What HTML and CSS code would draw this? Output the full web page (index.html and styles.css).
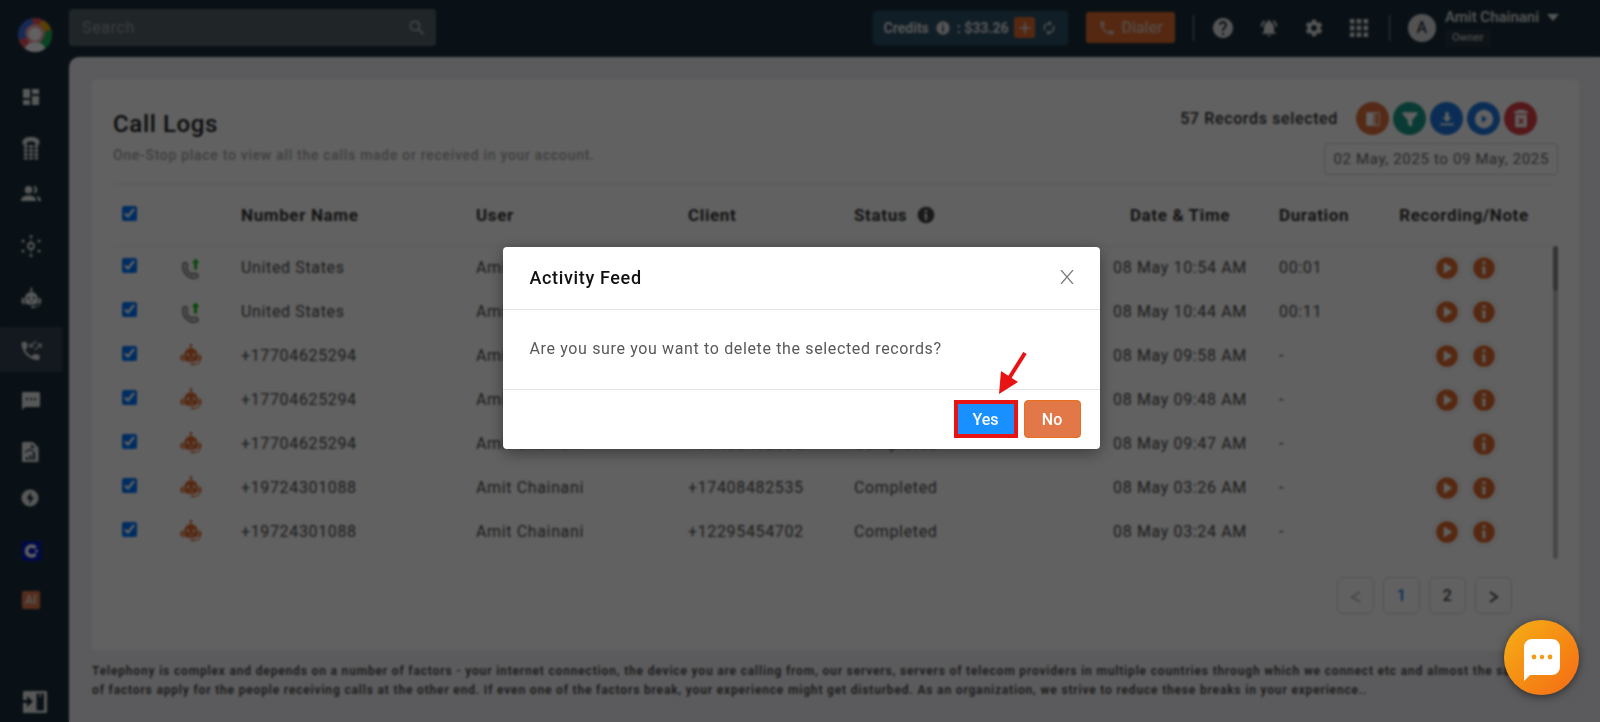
FILE: index.html
```html
<!DOCTYPE html>
<html lang="en">
<head>
  <meta charset="UTF-8" />
  <meta name="viewport" content="width=device-width, initial-scale=1" />
  <title>Call Logs</title>
  <link rel="stylesheet" href="styles.css">
</head>
<body>

<svg class="sprite" aria-hidden="true">
  <symbol id="i-bot" viewBox="0 0 24 24">
    <circle cx="12" cy="0" r="1.500"/>
    <path d="M11.200 0h1.600v5h-1.600z"/>
    <path fill-rule="evenodd" d="M12 3.500c-4.500 0-7.500 3.500-7.500 8.500v4.500c4.500 2.500 10.500 2.500 15 0V12c0-5-3-8.500-7.500-8.500zM8.800 9.300a1.300 1.300 0 1 1 0 2.600 1.300 1.300 0 0 1 0-2.600zm6.400 0a1.300 1.300 0 1 1 0 2.600 1.300 1.300 0 0 1 0-2.600zM9.500 13.500c1.500 1 3.500 1 5 0-.5 2-4.500 2-5 0z"/>
    <path d="M3.500 10v8C1.800 17.800.5 16.500.5 14s1.300-3.800 3-4zM20.500 10v8c1.700-.2 3-1.500 3-4s-1.300-3.800-3-4z"/>
    <path fill="none" stroke="currentColor" stroke-width="1.100" d="M21.500 18c-.8 2-3 2.800-6 3"/>
    <rect x="11.500" y="19.800" width="4.500" height="2.200" rx="1.100"/>
  </symbol>
  <symbol id="i-outgoing" viewBox="0 0 24 24">
    <path fill="none" stroke="#8c8c8c" stroke-width="2.400" stroke-linejoin="round" d="M3.500 7.500c1.500-1.500 3.500-1.500 4.300.3.600 1.500.2 2.600-1 3.700.8 3.500 3.200 6.400 6.600 7.900 1.300-1.600 2.700-2 4.300-1.200 2 1 2.300 2.800.8 4-6.500 3.300-17-4-15-14.700z"/>
    <path fill="#0db50d" d="M17 1.500l4 5h-2.500v7h-3v-7H13z"/>
  </symbol>
  <symbol id="i-play" viewBox="0 0 24 24">
    <path fill-rule="evenodd" d="M12 2a10 10 0 1 0 0 20 10 10 0 0 0 0-20zM9 7v10l8-5z"/>
  </symbol>
  <symbol id="i-info" viewBox="0 0 24 24">
    <path fill-rule="evenodd" d="M12 2a10 10 0 1 0 0 20 10 10 0 0 0 0-20zm-1.300 4h2.600v2.600h-2.600zM10 10.500h3.300V18h-2.600v-5.500H10z"/>
  </symbol>
  <symbol id="i-phone" viewBox="0 0 24 24">
    <path d="M6.620 10.790c1.440 2.830 3.760 5.140 6.590 6.590l2.200-2.200c.27-.27.67-.36 1.020-.24 1.120.37 2.330.57 3.570.57.55 0 1 .45 1 1V20c0 .55-.45 1-1 1-9.390 0-17-7.610-17-17 0-.55.45-1 1-1h3.500c.55 0 1 .45 1 1 0 1.250.2 2.450.57 3.570.11.35.03.74-.25 1.020z"/>
  </symbol>
</svg>

<div class="app">
  <aside class="sidebar">
    <a class="logo" href="#" aria-label="Home">
      <svg viewBox="0 0 34 34">
        <clipPath id="disc"><circle cx="17" cy="17" r="17"/></clipPath>
        <g clip-path="url(#disc)">
          <rect width="34" height="34" fill="#3d6fe0"/>
          <path fill="#e8505b" d="M17 17L14 0h11v8z"/>
          <path fill="#f0a800" d="M17 17l6-14 11 0v12z"/>
          <path fill="#1fae5a" d="M17 17l17-6v18l-8 5z"/>
          <path fill="#e8505b" d="M17 17L0 22l6 10 8-4z"/>
          <path fill="#f3a5aa" d="M7 16a10 10 0 0 1 20 0l-4 8H11z"/>
          <circle cx="17" cy="16" r="6.500" fill="#fff"/>
          <path fill="#fff" d="M6 34c1-7 5-10 11-10s10 3 11 10z"/>
        </g>
      </svg>
    </a>
    <nav class="nav">
      <a href="#" aria-label="Dashboard"><svg viewBox="0 0 24 24"><path d="M4 1h7v9H4zM4 12h7v5H4zM13 1h7v5h-7zM13 8h7v9h-7z"/></svg></a>
      <a href="#" aria-label="Dialpad"><svg viewBox="0 0 24 24">
        <path d="M12-1c5 0 8.500 2 8.500 5v2.500h-4.500V4.500c-1-1.200-7-1.200-8 0v2H3.500V4c0-3 3.500-5 8.500-5z"/>
        <path d="M5 7h3.500v3H5zM10.300 7h3.500v3h-3.500zM15.500 7H19v3h-3.500zM5 11h3.500v3H5zM10.300 11h3.500v3h-3.500zM15.500 11H19v3h-3.500zM5 15h3.500v3H5zM10.300 15h3.500v3h-3.500zM15.500 15H19v3h-3.500zM5 19h3.500v2.500H5zM10.300 19h3.500v2.500h-3.500zM15.500 19H19v2.500h-3.500z"/></svg></a>
      <a href="#" aria-label="Contacts"><svg viewBox="0 0 24 24"><circle cx="9.500" cy="1.800" r="3.800"/><path d="M2 13c0-4 3.500-5.500 7.500-5.500S17 9 17 13zM14.500-2c5-.5 5 7.800 0 7.600 1.600-2 1.600-5.500 0-7.600zM17.500 8c3 .5 4.500 2.200 4.500 5h-3c0-2.200-.4-3.700-1.500-5z"/></svg></a>
      <a href="#" aria-label="Integrations"><svg viewBox="0 0 24 24"><circle cx="12" cy="8" r="3" fill="none" stroke="currentColor" stroke-width="1.800"/>
        <circle cx="12" cy="-1.500" r="1.500"/><circle cx="12" cy="17.500" r="1.500"/><circle cx="4" cy="3" r="1.500"/><circle cx="20" cy="3" r="1.500"/><circle cx="4" cy="13" r="1.500"/><circle cx="20" cy="13" r="1.500"/><path d="M11.600 1h.8v3h-.8zM11.600 12h.8v3h-.8z"/></svg></a>
      <a href="#" aria-label="Voice bots"><svg viewBox="0 0 24 24"><g transform="translate(2 1) scale(.86)"><use href="#i-bot" width="24" height="24"/></g></svg></a>
      <a href="#" class="active" aria-label="Call logs"><svg viewBox="0 0 24 24">
        <path d="M6.120 11.790c1.440 2.830 3.760 5.140 6.590 6.590l2.200-2.200c.27-.27.67-.36 1.020-.24 1.120.37 2.330.57 3.570.57.55 0 1 .45 1 1V21c0 .55-.45 1-1 1-9.390 0-17-7.610-17-17 0-.55.45-1 1-1h3.500c.55 0 1 .45 1 1 0 1.250.2 2.450.57 3.570.11.35.03.74-.25 1.020z"/>
        <path fill="none" stroke="currentColor" stroke-width="1.200" d="M17 3l-6 6M11 5v4h4M16 12l6-6M18 6h4v4"/></svg></a>
      <a href="#" aria-label="Messages"><svg viewBox="0 0 24 24"><path fill-rule="evenodd" d="M4.500 4h15c1 0 1.500.5 1.500 1.500v12c0 1-.5 1.500-1.500 1.500H6l-3 3V5.500C3 4.500 3.500 4 4.500 4zM7 10v2h2v-2zm4 0v2h2v-2zm4 0v2h2v-2z"/></svg></a>
      <a href="#" aria-label="Reports"><svg viewBox="0 0 24 24"><path fill-rule="evenodd" d="M4.500 4H14l5.500 5.500v13c0 1-.5 1.500-1.500 1.500H4.500C3.500 24 3 23.500 3 22.500v-17C3 4.500 3.500 4 4.500 4zM12 6v4h4zM7 19v3h2v-3zm3.500-2v5h2v-5zm3.500-3v8h2v-8zM6 15l5-3 2 2 3-3-3 1.500-2-2-5 3z"/></svg></a>
      <a href="#" aria-label="Automation"><svg viewBox="0 0 24 24"><path fill-rule="evenodd" d="M11 1.500a8.500 8.500 0 1 0 0 17 8.500 8.500 0 0 0 0-17zM12 4v5h3l-4.500 7v-5H7.500z"/></svg></a>
      <a href="#" aria-label="Connect"><svg viewBox="0 0 24 24"><rect x="2.500" y="3" width="20" height="20" rx="2" fill="#0018b8"/><path fill="none" stroke="#fff" stroke-width="3.600" d="M16.500 10a5 5 0 1 0 0 6"/><circle cx="17.500" cy="13" r="1.500" fill="#fff"/></svg></a>
      <a href="#" aria-label="AI"><span class="ai">AI</span></a>
    </nav>
    <button class="collapse" aria-label="Expand menu">
      <svg viewBox="0 0 24 22"><path fill-rule="evenodd" d="M1.500 0h21c1 0 1.500.5 1.500 1.500v19c0 1-.5 1.500-1.500 1.500h-21C.5 22 0 21.500 0 20.500V12h4v4l6-5.500L4 5v4H0V1.500C0 .5.500 0 1.500 0zM13.500 2.500v17H21v-17zm3 .5h1.500v3h-1.500z"/></svg>
    </button>
  </aside>

  <div class="main">
    <header class="topbar">
      <form class="search">
        <input type="text" placeholder="Search" aria-label="Search">
        <svg viewBox="0 0 24 24"><path d="M15.500 14h-.79l-.28-.27A6.470 6.470 0 0 0 16 9.500 6.500 6.500 0 1 0 9.500 16c1.610 0 3.090-.59 4.230-1.570l.27.28v.79l5 4.990L20.490 19l-4.990-5zm-6 0C7.010 14 5 11.990 5 9.500S7.010 5 9.500 5 14 7.010 14 9.500 11.990 14 9.500 14z"/></svg>
      </form>
      <div class="tools">
        <div class="credits">
          <span>Credits</span>
          <svg class="credit-info" viewBox="0 0 24 24"><use href="#i-info"/></svg>
          <span>: $33.26</span>
          <button class="plus" aria-label="Add credits"><svg viewBox="0 0 24 24"><path d="M10.800 4h2.400v6.800H20v2.400h-6.800V20h-2.400v-6.800H4v-2.400h6.800z"/></svg></button>
          <button class="refresh" aria-label="Refresh"><svg viewBox="0 0 24 24"><path d="M12 6v3l4-4-4-4v3c-4.420 0-8 3.580-8 8 0 1.570.46 3.030 1.240 4.260L6.700 14.800A5.870 5.870 0 0 1 6 12c0-3.310 2.690-6 6-6zm6.760 1.740L17.300 9.200c.44.84.7 1.790.7 2.800 0 3.310-2.690 6-6 6v-3l-4 4 4 4v-3c4.420 0 8-3.580 8-8 0-1.570-.46-3.030-1.240-4.260z"/></svg></button>
        </div>
        <button class="dialer"><svg viewBox="0 0 24 24"><use href="#i-phone"/></svg>Dialer</button>
        <div class="shortcuts">
          <button aria-label="Help"><svg viewBox="1 1 22 22"><path d="M12 2C6.480 2 2 6.480 2 12s4.480 10 10 10 10-4.480 10-10S17.520 2 12 2zm1 17h-2v-2h2v2zm2.070-7.750l-.9.920C13.450 12.900 13 13.500 13 15h-2v-.5c0-1.100.45-2.100 1.170-2.830l1.240-1.260c.37-.36.59-.86.59-1.410 0-1.100-.9-2-2-2s-2 .9-2 2H8c0-2.210 1.790-4 4-4s4 1.790 4 4c0 .88-.36 1.680-.93 2.250z"/></svg></button>
          <button aria-label="Notifications"><svg viewBox="0 0 24 24"><path d="M7.580 4.080L6.150 2.650C3.750 4.480 2.170 7.300 2.030 10.500h2a8.450 8.450 0 0 1 3.550-6.420zm12.390 6.420h2c-.15-3.200-1.730-6.020-4.120-7.850l-1.420 1.430a8.500 8.500 0 0 1 3.540 6.420zM18 11c0-3.070-1.640-5.640-4.500-6.320V4c0-.83-.67-1.500-1.500-1.500s-1.500.67-1.500 1.500v.68C7.630 5.360 6 7.920 6 11v5l-2 2v1h16v-1l-2-2v-5zm-6 11c1.100 0 2-.9 2-2h-4c0 1.100.9 2 2 2z"/></svg></button>
          <button aria-label="Settings"><svg viewBox="0 0 24 24"><path d="M19.430 12.980c.04-.32.07-.64.07-.98s-.03-.66-.07-.98l2.110-1.650c.19-.15.24-.42.12-.64l-2-3.460c-.12-.22-.39-.3-.61-.22l-2.490 1c-.52-.4-1.080-.73-1.690-.98l-.38-2.650A.49.490 0 0 0 14 2h-4c-.25 0-.46.180-.49.420l-.38 2.650c-.61.25-1.170.59-1.690.98l-2.490-1c-.23-.09-.49 0-.61.22l-2 3.460c-.13.22-.07.49.12.64l2.110 1.650c-.04.32-.07.65-.07.98s.03.66.07.98l-2.110 1.650c-.19.15-.24.42-.12.64l2 3.460c.12.22.39.3.61.22l2.490-1c.52.4 1.080.73 1.690.98l.38 2.650c.03.24.24.42.49.42h4c.25 0 .46-.18.49-.42l.38-2.650c.61-.25 1.170-.59 1.690-.98l2.490 1c.23.090.49 0 .61-.22l2-3.460c.12-.22.07-.49-.12-.64l-2.110-1.650zM12 15.500c-1.930 0-3.500-1.570-3.500-3.500s1.570-3.500 3.500-3.500 3.500 1.570 3.500 3.500-1.570 3.500-3.500 3.500z"/></svg></button>
          <button aria-label="Apps"><svg viewBox="1 1 22 22"><path d="M2 2h5v5H2zM9.500 2h5v5h-5zM17 2h5v5h-5zM2 9.500h5v5H2zM9.500 9.500h5v5h-5zM17 9.500h5v5h-5zM2 17h5v5H2zM9.500 17h5v5h-5zM17 17h5v5h-5z"/></svg></button>
        </div>
        <div class="user">
          <span class="avatar">A</span>
          <div class="who">
            <button class="who-name">Amit Chainani <svg viewBox="0 0 12 7"><path d="M0 0h12L6 7z"/></svg></button>
            <span class="role">Owner</span>
          </div>
        </div>
      </div>
    </header>

    <main class="content">
      <section class="card">
        <div class="card-head">
          <div>
            <h1>Call Logs</h1>
            <p class="sub">One-Stop place to view all the calls made or received in your account.</p>
          </div>
          <div class="card-side">
            <div class="actions">
              <span class="selected">57 Records selected</span>
              <button class="act columns" aria-label="Columns"><svg viewBox="0 0 24 24"><path fill-rule="evenodd" d="M4 4h16v16H4zM12.500 5.200v13.600h1.200V5.200zM15 5.200v13.600h3.800V5.200z"/></svg></button>
              <button class="act filter" aria-label="Filter"><svg viewBox="0 0 24 24"><path d="M3 4h18v2l-6.500 7.500V21l-5-2v-5.500L3 6z"/></svg></button>
              <button class="act download" aria-label="Download"><svg viewBox="0 0 24 24"><path d="M10 4h4v6h3.500L12 15.500 6.500 10H10zM4 17.500h16v2H4z"/></svg></button>
              <button class="act playall" aria-label="Play all"><svg viewBox="0 0 24 24"><path fill-rule="evenodd" d="M12 1a11 11 0 1 0 0 22 11 11 0 0 0 0-22zM9.500 7.500v9l6-4.500z"/></svg></button>
              <button class="act delete" aria-label="Delete"><svg viewBox="0 0 24 24"><path fill-rule="evenodd" d="M8.500 1h7l1 1.500H20v3H4v-3h3.500zM5 7h14v13.500c0 1-.5 1.500-1.500 1.500h-11c-1 0-1.500-.5-1.500-1.500zM9.700 10.500l-1.200 1.200 2.300 2.800-2.300 2.800 1.200 1.200 2.300-2.500 2.300 2.500 1.200-1.200-2.300-2.800 2.300-2.800-1.200-1.200-2.300 2.500z"/></svg></button>
            </div>
            <button class="range">02 May, 2025 to 09 May, 2025</button>
          </div>
        </div>

        <div class="table-box">
          <table>
            <colgroup>
              <col class="c-check"><col class="c-type"><col class="c-name"><col class="c-user"><col class="c-client"><col class="c-status"><col class="c-date"><col class="c-dur"><col class="c-rec">
            </colgroup>
            <thead>
              <tr>
                <th class="check"><input type="checkbox" aria-label="Select all" checked></th>
                <th></th>
                <th>Number Name</th>
                <th>User</th>
                <th>Client</th>
                <th><div class="with-icon">Status <svg viewBox="0 0 24 24"><use href="#i-info"/></svg></div></th>
                <th class="mid">Date &amp; Time</th>
                <th>Duration</th>
                <th class="mid">Recording/Note</th>
              </tr>
            </thead>
            <tbody id="rows"></tbody>
          </table>
          <div class="scroll"><div class="scroll-thumb"></div></div>
        </div>

        <nav class="pages" aria-label="Pages">
          <button disabled aria-label="Previous"><svg viewBox="0 0 10 12"><path d="M9 3L1 8l8 5"/></svg></button>
          <button class="current">1</button>
          <button>2</button>
          <button aria-label="Next"><svg viewBox="0 0 10 12"><path d="M1 3l7 5-7 5"/></svg></button>
        </nav>
      </section>
      <p class="notice">Telephony is complex and depends on a number of factors - your internet connection, the device you are calling from, our servers, servers of telecom providers in multiple countries through which we connect etc and almost the same set of factors apply for the people receiving calls at the other end. If even one of the factors break, your experience might get disturbed. As an organization, we strive to reduce these breaks in your experience..</p>
    </main>
  </div>
</div>

<div class="mask">
  <div class="modal" role="dialog" aria-labelledby="modal-title">
    <div class="modal-head">
      <h2 id="modal-title">Activity Feed</h2>
      <button class="close" aria-label="Close"><svg viewBox="0 0 14 14"><path d="M1 0l12 14M13 0L1 14"/></svg></button>
    </div>
    <div class="modal-body">Are you sure you want to delete the selected records?</div>
    <div class="modal-foot">
      <button class="btn yes">Yes</button>
      <button class="btn no">No</button>
      <svg class="pointer" viewBox="0 0 28 42"><path fill="none" stroke="#e81414" stroke-width="4" d="M26 1L9 28"/><path fill="#e81414" d="M0 42L2 19l17 11z"/></svg>
    </div>
  </div>
</div>

<button class="chat" aria-label="Open chat">
  <svg viewBox="0 0 36 42"><path fill="#fff" d="M8 0h20a8 8 0 0 1 8 8v20a8 8 0 0 1-8 8H6l-6 6V8a8 8 0 0 1 8-8z"/><g fill="#f59a14"><circle cx="10" cy="18" r="2.400"/><circle cx="18" cy="18" r="2.200"/><circle cx="26" cy="18" r="2.400"/></g></svg>
</button>

<script>
  const calls = [
    { type: 'outgoing', name: 'United States', client: '+17408482535', time: '08 May 10:54 AM', duration: '00:01', rec: true },
    { type: 'outgoing', name: 'United States', client: '+17408482535', time: '08 May 10:44 AM', duration: '00:11', rec: true },
    { type: 'bot', name: '+17704625294', client: '+17408482535', time: '08 May 09:58 AM', duration: '-', rec: true },
    { type: 'bot', name: '+17704625294', client: '+17408482535', time: '08 May 09:48 AM', duration: '-', rec: true },
    { type: 'bot', name: '+17704625294', client: '+17408482535', time: '08 May 09:47 AM', duration: '-', rec: false },
    { type: 'bot', name: '+19724301088', client: '+17408482535', time: '08 May 03:26 AM', duration: '-', rec: true },
    { type: 'bot', name: '+19724301088', client: '+12295454702', time: '08 May 03:24 AM', duration: '-', rec: true }
  ];

  const icon = (id) => `<svg viewBox="0 0 24 24"><use href="#i-${id}"/></svg>`;

  document.getElementById('rows').innerHTML = calls.map((c) => `
    <tr>
      <td class="check"><input type="checkbox" aria-label="Select call" checked></td>
      <td class="type">${icon(c.type)}</td>
      <td>${c.name}</td>
      <td>Amit Chainani</td>
      <td>${c.client}</td>
      <td>Completed</td>
      <td class="mid">${c.time}</td>
      <td>${c.duration}</td>
      <td><div class="rec">
        ${c.rec ? `<button aria-label="Play">${icon('play')}</button>` : ''}
        <button aria-label="Note">${icon('info')}</button>
      </div></td>
    </tr>`).join('');
</script>

</body>
</html>
```

FILE: styles.css
```css
* {
  box-sizing: border-box;
}
body {
  margin: 0;
  font-family: Roboto, sans-serif;
  font-size: 16px;
  letter-spacing: 0.04em;
  color: #4a4a4a;
  background: #1a2f3b;
}
button, input {
  font: inherit;
  letter-spacing: inherit;
  color: inherit;
}
button {
  padding: 0;
  border: none;
  background: none;
  cursor: pointer;
}
svg {
  display: block;
  fill: currentColor;
}
.sprite {
  position: absolute;
  width: 0;
  height: 0;
}
.sprite symbol, .type svg, .nav svg {
  overflow: visible;
}
.app {
  display: flex;
  min-height: 100vh;
}

/* sidebar */
.sidebar {
  flex: 0 0 69px;
  display: flex;
  flex-direction: column;
  color: #e8e8e8;
}
.logo {
  margin: 18px 0 25px 18px;
}
.logo svg {
  width: 34px;
  height: 34px;
}
.nav {
  display: flex;
  flex-direction: column;
  gap: 5px;
}
.nav a {
  display: flex;
  align-items: center;
  justify-content: center;
  width: 62px;
  height: 45px;
  color: inherit;
  text-decoration: none;
}
.nav a.active {
  background: #34424f;
}
.nav svg {
  width: 24px;
  height: 24px;
}
.ai {
  width: 18px;
  border-radius: 2px;
  background: #e27748;
  font-size: 12px;
  font-weight: 500;
  letter-spacing: normal;
  line-height: 18px;
  text-align: center;
}
.collapse {
  margin: auto 0 9px 23px;
  width: 24px;
}

/* top bar */
.main {
  flex: 1;
  min-width: 0;
  display: flex;
  flex-direction: column;
}
.topbar {
  display: flex;
  justify-content: space-between;
  align-items: center;
  height: 57px;
  padding: 0 41px 2px 0;
}
.search {
  display: flex;
  align-items: center;
  flex: 0 1 367px;
  height: 37px;
  padding: 0 9px 0 13px;
  border-radius: 4px;
  background: #55636a;
  color: #b8b8b8;
}
.search input {
  flex: 1;
  min-width: 0;
  padding: 0;
  border: none;
  background: none;
  outline: none;
}
.search input::placeholder {
  color: #9a9fa3;
}
.search svg {
  width: 20px;
  height: 20px;
}
.tools {
  display: flex;
  align-items: center;
  color: #e0e0e0;
  letter-spacing: normal;
}
.credits {
  display: flex;
  align-items: center;
  gap: 6px;
  height: 34px;
  padding: 0 11px;
  border-radius: 4px;
  background: #2c5066;
  font-size: 14px;
  font-weight: 700;
}
.credit-info {
  width: 16px;
  height: 16px;
}
.plus {
  width: 21px;
  height: 21px;
  border-radius: 3px;
  background: #e06a30;
}
.plus svg {
  width: 16px;
  margin: auto;
}
.refresh svg {
  width: 16px;
}
.dialer {
  display: flex;
  align-items: center;
  gap: 5px;
  height: 31px;
  margin-left: 18px;
  padding: 0 12px;
  border-radius: 3px;
  background: #e06a30;
  color: #e0c4b6;
  font-weight: 500;
}
.dialer svg {
  width: 18px;
}
.shortcuts {
  display: flex;
  align-items: center;
  gap: 25px;
  height: 26px;
  margin-left: 18px;
  padding: 0 20px 0 18px;
  border-left: 1px solid #8a949a;
  border-right: 1px solid #8a949a;
}
.shortcuts svg {
  width: 22px;
}
.shortcuts button + button svg {
  width: 20px;
}
.user {
  display: flex;
  align-items: center;
  gap: 9px;
  margin-left: 18px;
}
.avatar {
  width: 28px;
  border-radius: 50%;
  background: #d8d8d8;
  color: #2a3a44;
  font-weight: 500;
  line-height: 28px;
  text-align: center;
}
.who-name {
  display: flex;
  align-items: center;
  gap: 8px;
  font-size: 15px;
  font-weight: 500;
  line-height: 18px;
}
.who-name svg {
  width: 12px;
}
.role {
  display: inline-block;
  padding: 0 7px;
  border-radius: 3px;
  background: #23343f;
  color: #b8b8b8;
  font-size: 11px;
  font-weight: 500;
  line-height: 18px;
}

/* content */
.content {
  flex: 1;
  padding: 23px 21px 0 23px;
  border-top-left-radius: 10px;
  background: #f0f0f4;
}
.card {
  padding: 20px 21px 36px;
  border-radius: 4px;
  background: #fff;
}
.card-head {
  display: flex;
  justify-content: space-between;
  height: 84px;
}
h1 {
  margin: 8px 0 6px;
  color: #222;
  font-size: 24px;
  font-weight: 500;
  line-height: 32px;
}
.sub {
  margin: 0;
  color: #a8a8a8;
  font-size: 14px;
  font-weight: 500;
  letter-spacing: 0.05em;
  line-height: 18px;
}
.card-side {
  display: flex;
  flex-direction: column;
  align-items: flex-end;
  gap: 8px;
}
.actions {
  display: flex;
  align-items: center;
  gap: 4px;
  margin: 2px 21px 0 0;
}
.selected {
  margin-right: 14px;
  color: #333;
  font-weight: 500;
}
.act {
  width: 33px;
  height: 33px;
  border-radius: 50%;
  color: #fff;
}
.act svg {
  width: 20px;
  margin: auto;
}
.columns { background: #e0703c; }
.filter { background: #1a9c88; }
.download, .playall { background: #1f78e0; }
.delete { background: #dc4045; }
.range {
  height: 32px;
  padding: 0 8px;
  border: 1px solid #d0d0d0;
  border-radius: 4px;
  color: #666;
  font-size: 15px;
}

/* table */
.table-box {
  position: relative;
  padding: 0 5px 5px 0;
}
table {
  width: 100%;
  border-collapse: collapse;
  table-layout: fixed;
}
.c-check { width: 67px; }
.c-type { width: 61px; }
.c-name { width: 235px; }
.c-user { width: 212px; }
.c-client { width: 166px; }
.c-status { width: 227px; }
.c-date { width: 198px; }
.c-dur { width: 96px; }
.c-rec { width: 178px; }
th, td {
  padding: 0;
  text-align: left;
  white-space: nowrap;
}
th {
  height: 61px;
  border-top: 1px solid #ececec;
  border-bottom: 1px solid #ececec;
  color: #333;
  font-size: 17px;
  font-weight: 700;
}
td {
  height: 44px;
}
.mid {
  text-align: center;
}
.check {
  padding: 0 0 4px 9px;
}
.check input {
  display: block;
  width: 15px;
  height: 15px;
  margin: 0;
}
.type {
  color: #e06a30;
}
.type svg {
  width: 22px;
}
.with-icon {
  display: flex;
  align-items: center;
  gap: 9px;
}
.with-icon svg {
  width: 20px;
  color: #444;
}
.rec {
  display: flex;
  justify-content: flex-end;
  gap: 11px;
  padding-right: 56px;
  color: #e06a30;
}
.rec button {
  border-radius: 50%;
  box-shadow: 0 0 3px #ccc;
}
.rec svg {
  width: 26px;
}
.scroll {
  position: absolute;
  top: 62px;
  right: 0;
  bottom: 0;
  width: 5px;
  border-radius: 3px;
  background: #bdbdbd;
}
.scroll-thumb {
  height: 45px;
  border-radius: 3px;
  background: #8a8a8a;
}
.pages {
  display: flex;
  justify-content: flex-end;
  gap: 9px;
  margin: 18px 46px 0 0;
}
.pages button {
  width: 37px;
  height: 37px;
  border: 1px solid #d9d9d9;
  border-radius: 6px;
  font-weight: 500;
}
.pages button:disabled {
  color: #bbb;
}
.pages .current {
  color: #1976e8;
}
.pages svg {
  width: 10px;
  margin: auto;
  overflow: visible;
  fill: none;
  stroke: currentColor;
  stroke-width: 2;
}
.notice {
  margin: 12px 0 0;
  padding-right: 16px;
  color: #444;
  font-size: 12px;
  font-weight: 600;
  letter-spacing: 0.07em;
  line-height: 19px;
}

/* confirm dialog */
.mask {
  position: fixed;
  inset: 0;
  display: flex;
  align-items: center;
  justify-content: center;
  padding: 0 0 26px 2px;
  background: rgba(0, 0, 0, 0.62);
  backdrop-filter: blur(1px);
}
.modal {
  width: 597px;
  border-radius: 4px;
  background: #fff;
  box-shadow: 0 4px 16px rgba(0, 0, 0, 0.4);
}
.modal-head {
  display: flex;
  align-items: center;
  justify-content: space-between;
  height: 63px;
  padding: 0 26px 2px 27px;
  border-bottom: 1px solid #e4e4e4;
}
.modal-head h2 {
  margin: 0;
  color: #111;
  font-size: 18px;
  font-weight: 500;
}
.close svg {
  width: 14px;
  stroke: #777;
  stroke-width: 1.2;
}
.modal-body {
  padding: 29px 27px 31px;
  color: #595959;
  line-height: 19px;
}
.modal-foot {
  position: relative;
  display: flex;
  justify-content: flex-end;
  gap: 6px;
  padding: 10px 19px 11px;
  border-top: 1px solid #e4e4e4;
}
.btn {
  height: 38px;
  color: #fff;
  font-weight: 500;
  letter-spacing: normal;
}
.yes {
  width: 64px;
  border: 4px solid #e81414;
  background: #1890ff;
}
.no {
  width: 57px;
  border: 1px solid #e8701a;
  border-radius: 4px;
  background: #e27748;
}
.pointer {
  position: absolute;
  top: -38px;
  right: 73px;
  width: 28px;
}
.chat {
  position: fixed;
  right: 21px;
  bottom: 27px;
  width: 75px;
  height: 75px;
  border-radius: 50%;
  background: linear-gradient(135deg, #f5b014, #f56a14);
  box-shadow: 0 2px 8px rgba(0, 0, 0, 0.5);
}
.chat svg {
  width: 36px;
  margin: 4px auto 0;
}
```
